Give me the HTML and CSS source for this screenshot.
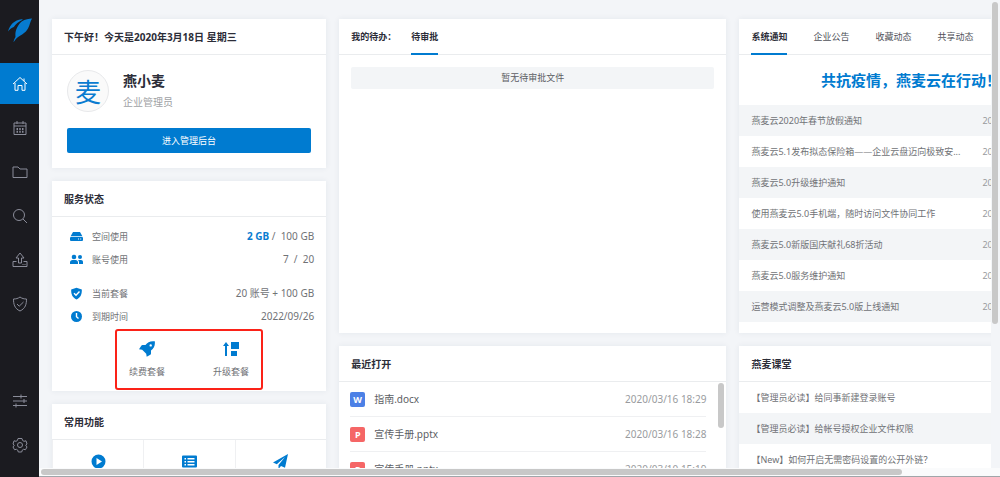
FILE: index.html
```html
<!DOCTYPE html>
<html lang="zh-CN">
<head>
<meta charset="utf-8">
<title>燕麦云</title>
<link rel="stylesheet" href="styles.css">
</head>
<body>
<div class="app">
  <nav class="sidebar" aria-label="主导航">
    <a class="logo" href="#" aria-label="燕麦云">
      <svg width="24" height="24" viewBox="0 0 24 24"><path d="M0 13.500C2 6.500 6.500 2 13.500 1.200L15 1.500C10.500 3.500 7.500 6.500 5.800 9 3.500 9.500 1.500 11.500 0 13.500Z"/><path d="M24 .5C22.300 3.500 21.800 7 20 10.500 17.500 15 13.500 16.800 10.500 18.800 8.500 20.200 7 22 5.500 24.300 6 21.500 6.700 20.500 7.500 19 6.800 13 9.500 7 14 3.300 17 1.200 21 .8 24 .5Z"/></svg>
    </a>
    <a class="nav-item active" href="#" aria-label="首页">
      <svg width="16" height="16" viewBox="0 0 16 16"><path d="M1 8 8 1.500 15 8M3 7v7.300h3V9.500h4v4.800h3V7M12 2.500v2.500"/></svg>
    </a>
    <a class="nav-item" href="#" aria-label="日程">
      <svg width="16" height="16" viewBox="0 0 16 16"><path d="M2 3h12v11.500H2zM2 6h12M5 1v3M11 1v3"/><path class="dots" d="M4.500 9h7M4.500 11.800h7"/></svg>
    </a>
    <a class="nav-item" href="#" aria-label="文件">
      <svg width="16" height="16" viewBox="0 0 16 16"><path d="M1 3h5l2 2h7v8.500H1z"/></svg>
    </a>
    <a class="nav-item" href="#" aria-label="搜索">
      <svg width="16" height="16" viewBox="0 0 16 16"><circle cx="7" cy="7" r="5.500"/><path d="m11 11 4 4"/></svg>
    </a>
    <a class="nav-item" href="#" aria-label="上传">
      <svg width="16" height="16" viewBox="0 0 16 16"><path d="M6.500 11V6H4l4-5 4 5H9.500v5zM4.500 9.500H1v5h14v-5h-3.500M10.500 12.500h1M12.500 12.500h1"/></svg>
    </a>
    <a class="nav-item" href="#" aria-label="安全">
      <svg width="16" height="16" viewBox="0 0 16 16"><path d="M8 1c2 1.500 4 2 6.500 2 0 5-1 9.500-6.500 12C2.500 12.500 1.500 8 1.500 3 4 3 6 2.500 8 1zM5 8l2.200 2.200L11.500 6"/></svg>
    </a>
    <div class="nav-bottom">
      <a class="nav-item" href="#" aria-label="偏好">
        <svg width="16" height="16" viewBox="0 0 16 16"><path d="M1 3.500h14M1 8h14M1 12.500h14M9 1.500v4M12 6v4M4 10.500v4"/></svg>
      </a>
      <a class="nav-item" href="#" aria-label="设置">
        <svg width="16" height="16" viewBox="0 0 16 16"><circle cx="8" cy="8" r="2.500"/><path d="m6 1.500h4l.6 2 1.400.8 2-.5 1 3.200-1.300 1.200L15 10l-1.500 2.700-2-.4-1.200.8-.6 1.900H6.300l-.6-1.900-1.200-.8-2 .4L1 10l1.300-1.800L1 7l1-3.200 2 .5 1.400-.8z"/></svg>
      </a>
    </div>
  </nav>

  <main class="viewport">
    <div class="board">
      <div class="column">
        <section class="card">
          <h2 class="card-head">下午好！今天是2020年3月18日 星期三</h2>
          <div class="profile">
            <div class="person">
              <div class="avatar">麦</div>
              <div>
                <div class="name">燕小麦</div>
                <div class="role">企业管理员</div>
              </div>
            </div>
            <button class="primary" type="button">进入管理后台</button>
          </div>
        </section>

        <section class="card">
          <h2 class="card-head">服务状态</h2>
          <div class="status">
            <div class="status-row">
              <svg class="solid" width="13" height="13" viewBox="0 0 13 13"><path d="M3 2h7l2.400 4.300H.6z"/><path fill-rule="evenodd" d="M1 7h11q1 0 1 1v2q0 1-1 1H1q-1 0-1-1V8q0-1 1-1zm7 1.500v1h1v-1zm2.200 0v1h1v-1z"/></svg>
              <span>空间使用</span><span class="value"><b>2 GB</b> /&nbsp; 100 GB</span>
            </div>
            <div class="status-row">
              <svg class="solid" width="13" height="13" viewBox="0 0 13 13"><circle cx="4" cy="4" r="2.300"/><circle cx="10" cy="4" r="2"/><path d="M0 11V9.500C0 8 1 7 2.500 7h3C7 7 8 8 8 9.500V11zM9 11V9.200C9 8 8.500 7.500 8 7h3c1.200 0 2 .8 2 2v2z"/></svg>
              <span>账号使用</span><span class="value">7&nbsp; /&nbsp; 20</span>
            </div>
            <div class="status-row spaced">
              <svg class="solid" width="13" height="13" viewBox="0 0 13 13"><path d="M6.500.8 11.800 2.500C12 7.500 10.500 10.500 6.500 12.500 2.500 10.500 1 7.500 1.200 2.500z"/><path class="mark" d="m4 6.300 2 2 3.500-3.800"/></svg>
              <span>当前套餐</span><span class="value">20 账号 + 100 GB</span>
            </div>
            <div class="status-row">
              <svg class="solid" width="13" height="13" viewBox="0 0 13 13"><circle cx="6.500" cy="6.500" r="5.500"/><path class="mark" d="M6.500 3v3.800l2 1.700"/></svg>
              <span>到期时间</span><span class="value">2022/09/26</span>
            </div>
            <div class="plan-actions">
              <button class="plan" type="button">
                <svg class="solid" width="16" height="16" viewBox="0 0 16 16"><path fill-rule="evenodd" d="M15.800.3C11.500-.2 8.500 1 6.500 4H3.500Q2.700 4 2.300 4.700L0 8.300l3.200.5 4 4 .5 2.900 3.600-2q.7-.4.7-1.200v-3C15 7.500 16.300 4.500 15.800.3zM11.700 3.200a1.200 1.200 0 1 1 0 2.400 1.200 1.200 0 0 1 0-2.400z"/></svg>
                续费套餐
              </button>
              <button class="plan" type="button">
                <svg class="solid" width="16" height="16" viewBox="0 0 16 16"><path d="M3 1 6 5H4v10H2V5H0zM8 1h8v7H8zM8 10h6v5H8z"/></svg>
                升级套餐
              </button>
            </div>
          </div>
        </section>

        <section class="card">
          <h2 class="card-head">常用功能</h2>
          <div class="shortcuts">
            <a class="shortcut" href="#" aria-label="播放"><svg class="solid" width="15" height="15" viewBox="0 0 15 15"><path fill-rule="evenodd" d="M7.500.5a7 7 0 1 1 0 14 7 7 0 0 1 0-14zM5.500 4v7l5.500-3.500z"/></svg></a>
            <a class="shortcut" href="#" aria-label="列表"><svg class="solid" width="15" height="15" viewBox="0 0 15 15"><path fill-rule="evenodd" d="M1 1.500h13q1 0 1 1v10q0 1-1 1H1q-1 0-1-1v-10q0-1 1-1zM2.500 4v1.500H4V4zm3 0v1.500h7V4zm-3 3v1.500H4V7zm3 0v1.500h7V7zm-3 3v1.500H4V10zm3 0v1.500h7V10z"/></svg></a>
            <a class="shortcut" href="#" aria-label="发送"><svg class="solid" width="15" height="15" viewBox="0 0 15 15"><path d="M15 0 0 8.500l3.800 1.700L12 3 5.500 11v4l2.500-3 4 1.700z"/></svg></a>
          </div>
        </section>
      </div>

      <div class="column">
        <section class="card todo">
          <div class="card-head tabs">
            <span class="tabs-label">我的待办：</span>
            <button class="tab selected" type="button">待审批</button>
          </div>
          <p class="empty">暂无待审批文件</p>
        </section>

        <section class="card">
          <h2 class="card-head">最近打开</h2>
          <div class="recent">
            <ul class="files">
              <li class="file"><span class="type word">W</span><span>指南.docx</span><time>2020/03/16 18:29</time></li>
              <li class="file"><span class="type slides">P</span><span>宣传手册.pptx</span><time>2020/03/16 18:28</time></li>
              <li class="file"><span class="type slides">P</span><span>宣传手册.pptx</span><time>2020/03/10 15:19</time></li>
            </ul>
            <div class="thumb list-thumb"></div>
          </div>
        </section>
      </div>

      <div class="column">
        <section class="card news">
          <div class="card-head tabs wide">
            <button class="tab selected" type="button">系统通知</button>
            <button class="tab" type="button">企业公告</button>
            <button class="tab" type="button">收藏动态</button>
            <button class="tab" type="button">共享动态</button>
          </div>
          <p class="headline">共抗疫情，燕麦云在行动！</p>
          <ul class="notices odd">
            <li><a href="#">燕麦云2020年春节放假通知</a><time>2020</time></li>
            <li><a href="#">燕麦云5.1发布拟态保险箱——企业云盘迈向极致安...</a><time>2020</time></li>
            <li><a href="#">燕麦云5.0升级维护通知</a><time>2020</time></li>
            <li><a href="#">使用燕麦云5.0手机端，随时访问文件协同工作</a><time>2020</time></li>
            <li><a href="#">燕麦云5.0新版国庆献礼68折活动</a><time>2020</time></li>
            <li><a href="#">燕麦云5.0服务维护通知</a><time>2020</time></li>
            <li><a href="#">运营模式调整及燕麦云5.0版上线通知</a><time>2020</time></li>
          </ul>
        </section>

        <section class="card">
          <h2 class="card-head">燕麦课堂</h2>
          <ul class="notices even">
            <li><a href="#">【管理员必读】给同事新建登录账号</a></li>
            <li><a href="#">【管理员必读】给帐号授权企业文件权限</a></li>
            <li><a href="#">【New】如何开启无需密码设置的公开外链？</a></li>
          </ul>
        </section>
      </div>
    </div>
  </main>
  <div class="track-y"><div class="thumb thumb-y"></div></div>
  <div class="track-x"><div class="thumb thumb-x"></div></div>
</div>
</body>
</html>
```
FILE: styles.css
```css
* { box-sizing: border-box; }

body {
  margin: 0;
  color: #707276;
  background: #f3f5f8;
  font: 9px/13px "Noto Sans", "Noto Sans CJK SC", sans-serif;
}

h2, p, ul { margin: 0; padding: 0; }
ul { list-style: none; }
a { color: inherit; text-decoration: none; }
button { border: 0; padding: 0; background: none; color: inherit; font: inherit; cursor: pointer; }
svg { display: block; flex: none; }

.app {
  display: grid;
  grid-template: minmax(0, 1fr) 9px / 39px minmax(0, 1fr) 9px;
  height: 100vh;
}

/* Sidebar */
.sidebar {
  grid-row: 1 / 3;
  display: flex;
  flex-direction: column;
  gap: 3px;
  padding-bottom: 12px;
  background: #1b1b20;
}
.logo { height: 60px; display: grid; place-items: center; }
.logo svg { fill: #067bd0; }
.nav-item { height: 41px; display: grid; place-items: center; color: #8a8c99; }
.nav-item.active { color: #fff; background: #007bd0; }
.nav-item svg { fill: none; stroke: currentColor; stroke-width: 1; }
.nav-item .dots { stroke-width: 2; stroke-dasharray: 1.5 1.25; }
.nav-bottom { margin-top: auto; display: grid; gap: 3px; }

/* Board */
.viewport { overflow: hidden; }
.board {
  display: grid;
  grid-template-columns: 274fr 387fr 343fr;
  gap: 13px;
  align-items: start;
  width: 111%;
  padding: 19px 13px;
}
.column { display: grid; gap: 13px; min-width: 0; }
.card { background: #fff; box-shadow: 0 0 6px rgba(30, 50, 80, 0.07); }
.card-head {
  height: 36px;
  padding: 0 12px;
  border-bottom: 1px solid #eaecee;
  color: #2c2d38;
  font-size: 10px;
  font-weight: 700;
  line-height: 36px;
}

/* Profile */
.profile { padding: 15px; }
.person { display: flex; align-items: center; gap: 14px; margin-bottom: 16px; }
.avatar {
  width: 42px;
  height: 42px;
  border: 1px solid #e8e9eb;
  border-radius: 50%;
  background: #fafafa;
  color: #0a7cd0;
  font-size: 26px;
  line-height: 42px;
  text-align: center;
}
.name { color: #2c2d38; font-size: 14px; line-height: 22px; font-weight: 700; }
.role { color: #a0a2a5; font-size: 10px; line-height: 20px; }
.primary { width: 100%; height: 25px; border-radius: 2px; background: #007bd0; color: #fff; }

/* Service status */
.solid { fill: #007bd0; }
.mark { fill: none; stroke: #fff; stroke-width: 1.4; }
.status { padding: 8px 0 1px; }
.status-row { display: flex; align-items: center; gap: 9px; height: 23px; padding: 0 12px 0 18px; }
.status-row.spaced { margin-top: 11px; }
.value { margin-left: auto; font-size: 10px; }
.value b { color: #0a7cd0; }
.plan-actions {
  display: flex;
  justify-content: space-between;
  width: 148px;
  height: 61px;
  margin: 1px auto 0;
  padding: 0 12px;
  border: 2px solid #fb2218;
  border-radius: 3px;
}
.plan { display: grid; justify-items: center; align-content: center; gap: 8px; white-space: nowrap; }

.shortcuts { display: grid; grid-template-columns: repeat(3, 1fr); }
.shortcut { height: 64px; padding-top: 14px; display: grid; justify-content: center; border-left: 1px solid #eff0f2; }

/* Tabs */
.tabs { display: flex; gap: 15px; font-size: 9px; }
.tabs.wide { gap: 26px; }
.tab { height: 36px; border-bottom: 2px solid transparent; color: #50525a; font-weight: 400; white-space: nowrap; }
.tab.selected { border-color: #007bd0; color: #2c2d38; font-weight: 700; }

.todo, .news { min-height: 314px; }
.empty { margin: 12px; border-radius: 2px; background: #f3f5f7; color: #5c5e64; line-height: 22px; text-align: center; }

/* Recent files */
.recent { display: flex; gap: 12px; padding: 0 2px 0 11px; }
.files { flex: 1; }
.file { display: flex; align-items: center; gap: 9px; height: 35px; border-bottom: 1px solid #eff0f2; color: #5c5e64; font-size: 10px; }
.file time { margin-left: auto; color: #999b9e; }
.type { width: 15px; height: 15px; border-radius: 2px; color: #fff; font-size: 9px; font-weight: 700; line-height: 15px; text-align: center; }
.word { background: #4c80e6; }
.slides { background: #f56666; }

/* Notices */
.headline { color: #007bd0; font-size: 15px; font-weight: 700; line-height: 50px; text-align: center; }
.notices li {
  display: grid;
  grid-template-columns: 219px 1fr;
  gap: 12px;
  align-items: center;
  height: 31px;
  padding: 0 12px;
  white-space: nowrap;
}
.notices time { color: #999b9e; }
.odd li:nth-child(odd), .even li:nth-child(even) { background: #f3f5f7; }

/* Scroll bars */
.thumb { border-radius: 3px; background: #c8c8c8; }
.list-thumb { width: 6px; height: 45px; margin-top: 1px; }
.track-y { padding: 2px 2px 0 1px; }
.thumb-y { height: 69%; }
.track-x { grid-column: 2 / 4; padding: 1px 2px; border-bottom: 1px solid #a0a6aa; background: #fafbfc; }
.thumb-x { width: 90%; height: 6px; }
```
